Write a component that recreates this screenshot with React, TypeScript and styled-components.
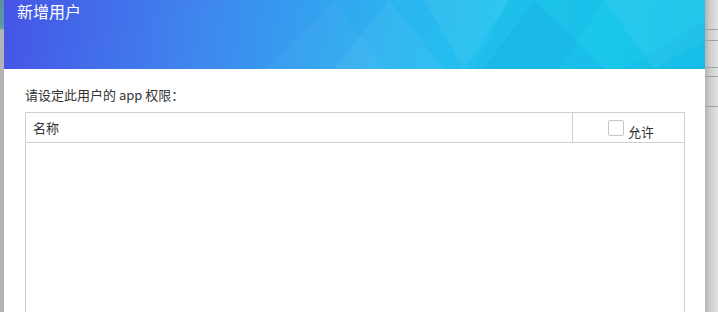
import styled, { createGlobalStyle } from "styled-components";

const GlobalStyle = createGlobalStyle`
  html, body {
    margin: 0;
    padding: 0;
    background: #b9b9b9;
    font-family: "Noto Sans CJK SC", "Noto Sans", sans-serif;
  }
`;

const Page = styled.div`
  display: flex;
  width: 718px;
  height: 312px;
  overflow: hidden;
`;

const LeftGutter = styled.div`
  width: 4px;
  flex-shrink: 0;
  background: linear-gradient(180deg, #5f8f9e 0px, #5c9aa6 28px, #b3b3b3 30px, #b3b3b3 100%);
`;

const RightGutter = styled.div`
  width: 13px;
  flex-shrink: 0;
  display: flex;
  flex-direction: column;
  background: linear-gradient(90deg, #b4b4b4 0%, #cfcfcf 40%, #e2e2e2 100%);
`;

const GutterRow = styled.div<{ h: number }>`
  height: ${({ h }) => h}px;
  flex-shrink: 0;
  border-bottom: 1px solid #a2a2a2;
`;

const Dialog = styled.div`
  width: 701px;
  flex-shrink: 0;
  background: #ffffff;
  display: flex;
  flex-direction: column;
`;

const Header = styled.div`
  position: relative;
  height: 69px;
  flex-shrink: 0;
  background: linear-gradient(100deg, #4654e6 0%, #3f86ee 28%, #2bb4f0 55%, #1ec8ee 75%, #17c3ea 100%);
  overflow: hidden;
`;

const Facets = styled.svg`
  position: absolute;
  inset: 0;
`;

const Title = styled.div`
  position: relative;
  padding: 2px 0 0 13px;
  line-height: 18px;
  font-size: 16px;
  color: #ffffff;
`;

const Body = styled.div`
  padding: 17px 20px 0 21px;
  display: flex;
  flex-direction: column;
  gap: 9px;
`;

const Label = styled.div`
  font-size: 13px;
  line-height: 17px;
  color: #333333;
`;

const Table = styled.div`
  border: 1px solid #cfcfcf;
  height: 240px;
`;

const HeadRow = styled.div`
  display: flex;
  height: 29px;
  border-bottom: 1px solid #cfcfcf;
`;

const NameCell = styled.div`
  flex: 1;
  padding: 6px 0 0 7px;
  font-size: 13px;
  line-height: 17px;
  color: #333333;
  border-right: 1px solid #cfcfcf;
`;

const AllowCell = styled.div`
  width: 111px;
  display: flex;
  align-items: flex-start;
  padding: 7px 0 0 35px;
  box-sizing: border-box;
  font-size: 13px;
  color: #333333;
`;

const CheckBox = styled.span`
  width: 14px;
  height: 14px;
  border: 1px solid #c4c4c4;
  border-radius: 2px;
  background: #fff;
  flex-shrink: 0;
`;

const AllowText = styled.span`
  margin: 3px 0 0 4px;
  line-height: 17px;
`;

export default function App() {
  return (
    <>
      <GlobalStyle />
      <Page>
        <LeftGutter />
        <Dialog>
          <Header>
            <Facets width="701" height="69" viewBox="0 0 701 69">
              <polygon points="385,0 440,69 330,69" fill="#ffffff" opacity="0.05" />
              <polygon points="420,0 505,0 460,69" fill="#ffffff" opacity="0.06" />
              <polygon points="505,0 600,0 555,69 470,69" fill="#0a8fd0" opacity="0.10" />
              <polygon points="530,0 600,69 480,69" fill="#0a7fc8" opacity="0.10" />
              <polygon points="600,0 701,0 701,40 650,69" fill="#ffffff" opacity="0.05" />
              <polygon points="620,69 701,20 701,69" fill="#0a8fd0" opacity="0.08" />
              <polygon points="260,69 330,0 380,69" fill="#ffffff" opacity="0.03" />
            </Facets>
            <Title>新增用户</Title>
          </Header>
          <Body>
            <Label>请设定此用户的 app 权限：</Label>
            <Table>
              <HeadRow>
                <NameCell>名称</NameCell>
                <AllowCell>
                  <CheckBox />
                  <AllowText>允许</AllowText>
                </AllowCell>
              </HeadRow>
            </Table>
          </Body>
        </Dialog>
        <RightGutter>
          <GutterRow h={29} />
          <GutterRow h={10} />
          <GutterRow h={26} />
          <GutterRow h={8} />
          <GutterRow h={29} />
        </RightGutter>
      </Page>
    </>
  );
}
